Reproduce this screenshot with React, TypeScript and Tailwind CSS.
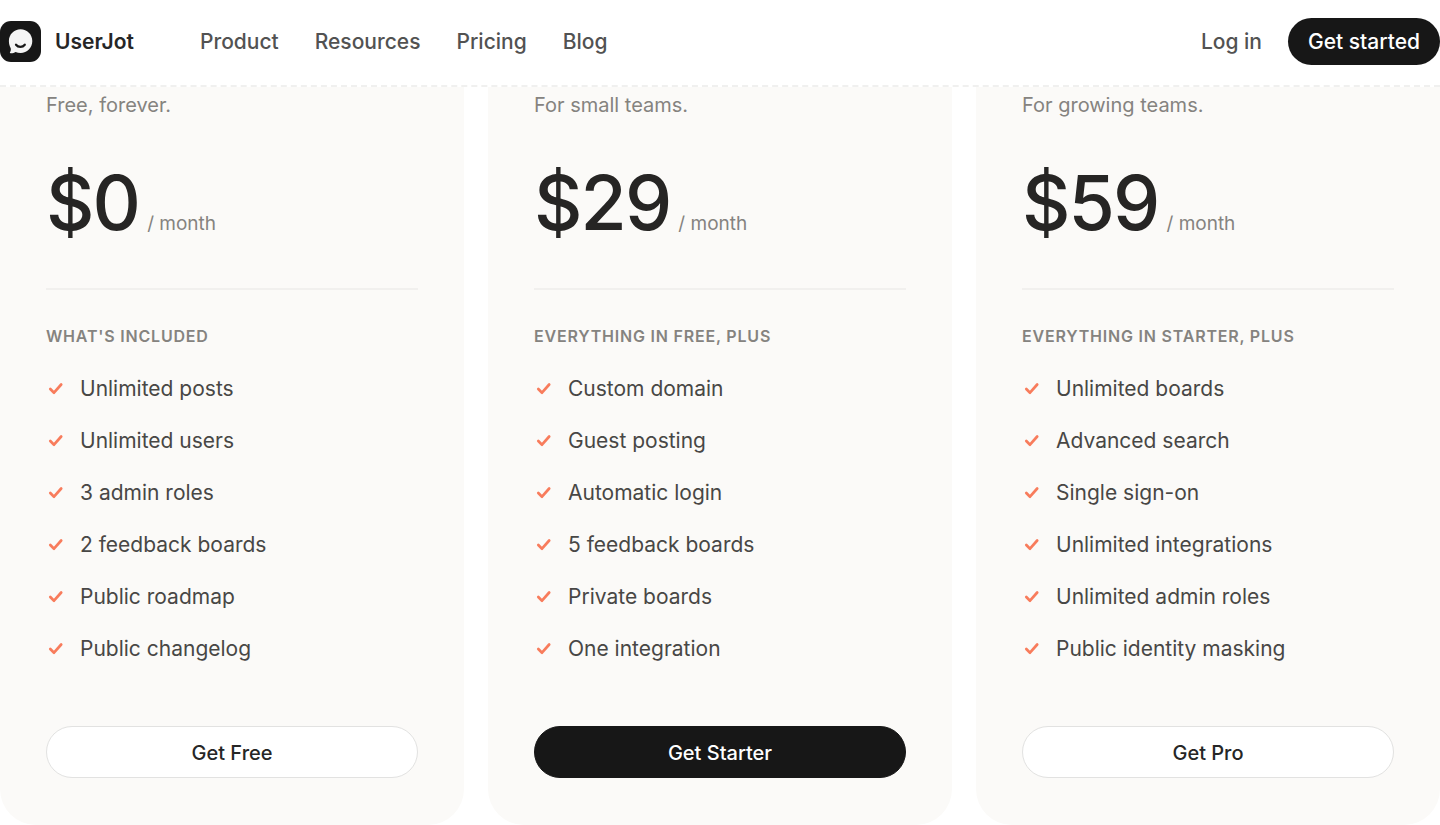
import React from "react";

interface Plan {
  name: string;
  tagline: string;
  price: string;
  heading: string;
  features: string[];
  highlighted?: boolean;
}

const NAV_LINKS = ["Product", "Resources", "Pricing", "Blog"];

const PLANS: Plan[] = [
  {
    name: "Free",
    tagline: "Free, forever.",
    price: "$0",
    heading: "What's included",
    features: [
      "Unlimited posts",
      "Unlimited users",
      "3 admin roles",
      "2 feedback boards",
      "Public roadmap",
      "Public changelog",
    ],
  },
  {
    name: "Starter",
    tagline: "For small teams.",
    price: "$29",
    heading: "Everything in Free, plus",
    features: [
      "Custom domain",
      "Guest posting",
      "Automatic login",
      "5 feedback boards",
      "Private boards",
      "One integration",
    ],
    highlighted: true,
  },
  {
    name: "Pro",
    tagline: "For growing teams.",
    price: "$59",
    heading: "Everything in Starter, plus",
    features: [
      "Unlimited boards",
      "Advanced search",
      "Single sign-on",
      "Unlimited integrations",
      "Unlimited admin roles",
      "Public identity masking",
    ],
  },
];

const Logo = () => (
  <svg viewBox="0 0 41 41" className="size-[41px]" aria-hidden="true">
    <rect width="41" height="41" rx="11" fill="#171717" />
    <path
      d="M20.600 8.300c6.500 0 11.700 5.100 11.700 11.800s-5.200 12-11.700 12c-1.900 0-3.500-.4-5-1.100-1.500.9-3.500 1.400-5.100 1.200-.7-.1-.8-.7-.4-1.200.7-.9.900-2.400.6-3.700-1.200-2-1.800-4.500-1.800-7.200 0-6.700 5.200-11.800 11.700-11.800Z"
      fill="#f5f5f5"
    />
    <path
      d="M16 23.700c2.200 2.800 6.600 2.800 8.800 0"
      fill="none"
      stroke="#171717"
      strokeWidth="2.200"
      strokeLinecap="round"
    />
  </svg>
);

const CheckIcon = () => (
  <svg
    viewBox="0 0 18 18"
    className="size-[18px] shrink-0"
    fill="none"
    stroke="#f87c5c"
    strokeWidth="2.700"
    strokeLinecap="round"
    strokeLinejoin="round"
    aria-hidden="true"
  >
    <path d="M4.300 9 8 12.700 15.200 4.500" />
  </svg>
);

const Header = () => (
  <header className="border-b-2 border-dashed border-[#f0f0ef] bg-white">
    <div className="flex h-[85px] items-center justify-between pb-0.5">
      <div className="flex items-center">
        <a href="#" className="flex items-center gap-3.5">
          <Logo />
          <span className="text-[21px] font-semibold text-[#262626]">
            UserJot
          </span>
        </a>
        <nav className="ml-[66px] flex gap-9 text-[21px] font-medium text-[#525252]">
          {NAV_LINKS.map((link) => (
            <a key={link} href="#">
              {link}
            </a>
          ))}
        </nav>
      </div>
      <div className="flex items-center gap-[26px] text-[21px] font-medium">
        <a href="#" className="text-[#525252]">
          Log in
        </a>
        <button
          type="button"
          className="h-[47px] rounded-full bg-[#171717] px-5 text-white"
        >
          Get started
        </button>
      </div>
    </div>
  </header>
);

const PlanCard: React.FC<{ plan: Plan }> = ({ plan }) => {
  return (
    <section className="rounded-b-[36px] bg-[#fbfaf8] px-[46px] pt-1 pb-[47px]">
      <p className="text-xl leading-7 text-[#85837f]">{plan.tagline}</p>
      <p className="mt-9 flex items-baseline gap-2">
        <span className="text-[75px] leading-[96px] font-medium tracking-tight text-[#262524]">
          {plan.price}
        </span>
        <span className="text-[19px] leading-7 text-[#85837f]">/ month</span>
      </p>
      <hr className="mt-[37px] border-t-2 border-[#f1f0ee]" />
      <h3 className="mt-[34px] text-base leading-6 font-semibold tracking-wider text-[#85837f] uppercase">
        {plan.heading}
      </h3>
      <ul className="mt-[27px] space-y-6 text-[21px] leading-7 text-[#484745]">
        {plan.features.map((feature) => (
          <li key={feature} className="flex items-center gap-4">
            <CheckIcon />
            {feature}
          </li>
        ))}
      </ul>
      <button
        type="button"
        className={`mt-[63px] h-[52px] w-full rounded-full border pt-0.5 text-xl font-medium ${
          plan.highlighted
            ? "border-[#171717] bg-[#171717] text-white"
            : "border-[#e2e2e1] bg-white text-[#262626]"
        }`}
      >
        Get {plan.name}
      </button>
    </section>
  );
};

export default function App() {
  return (
    <div className="bg-white font-['Inter',sans-serif] antialiased">
      <Header />
      <main className="grid grid-cols-3 gap-6">
        {PLANS.map((plan) => (
          <PlanCard key={plan.name} plan={plan} />
        ))}
      </main>
    </div>
  );
}
